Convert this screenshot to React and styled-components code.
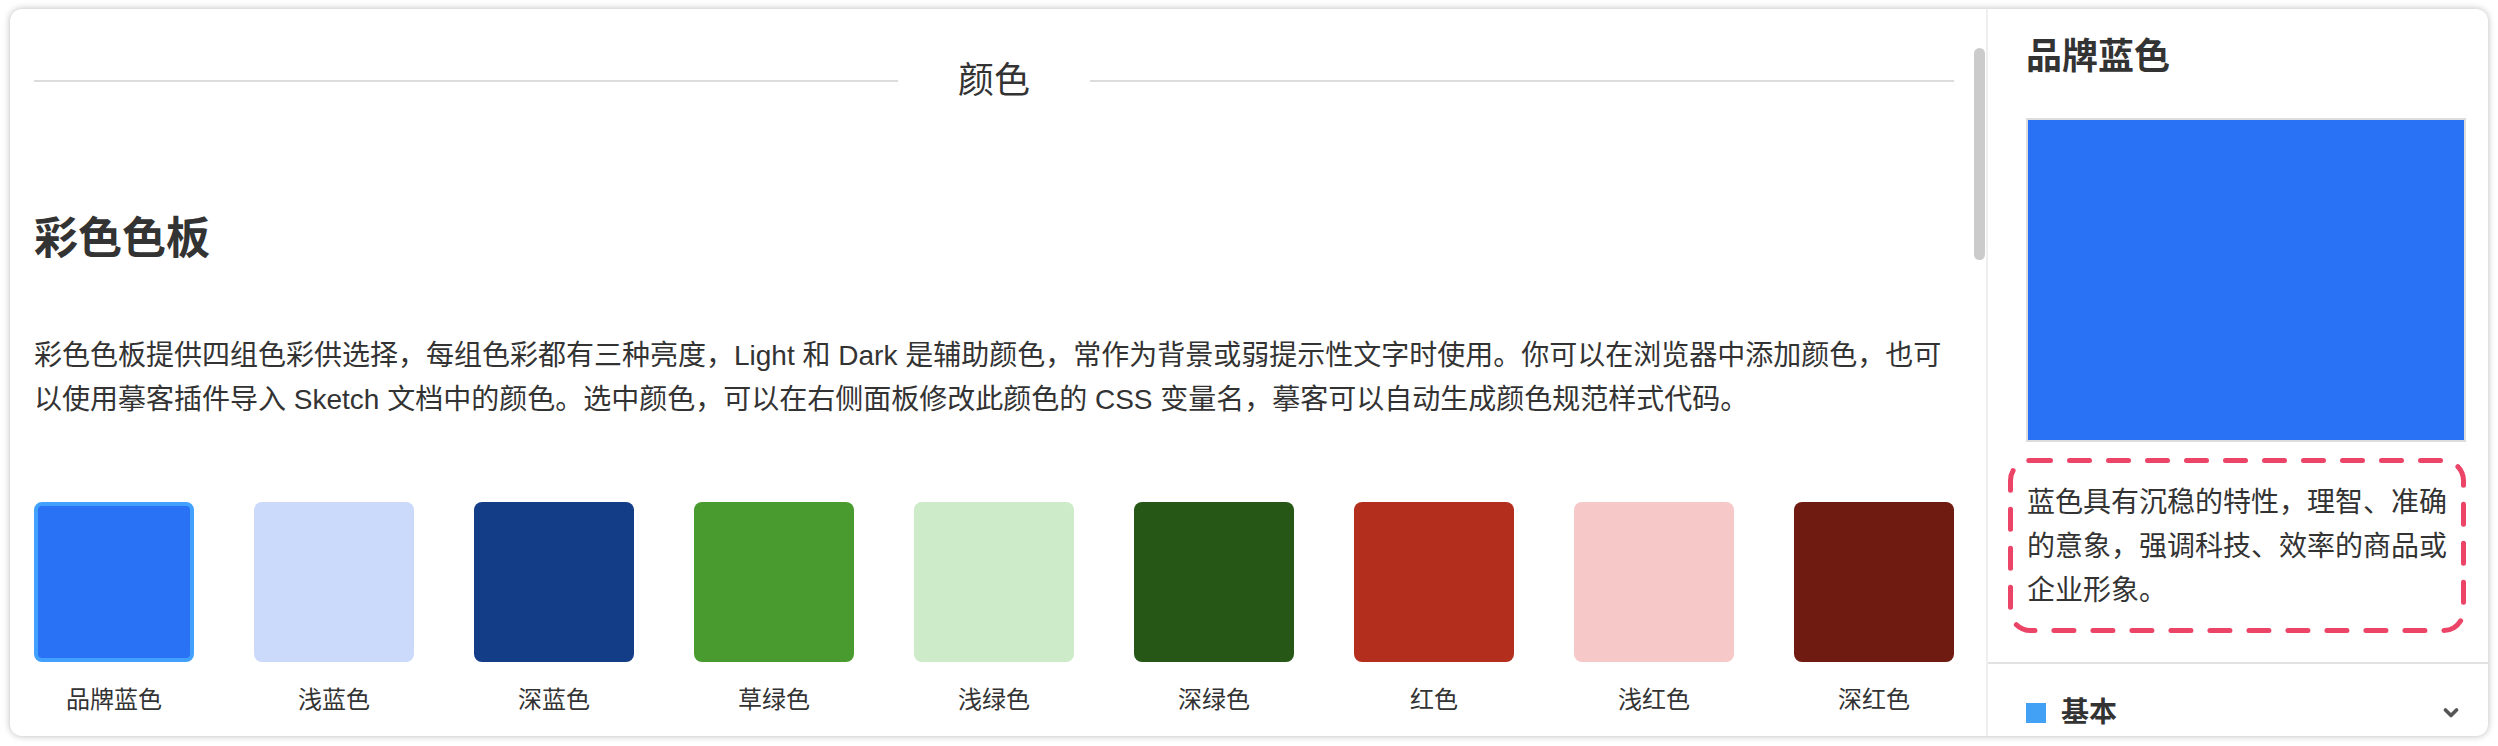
import styled, { createGlobalStyle } from 'styled-components';

const GlobalStyle = createGlobalStyle`
	html, body {
		margin: 0;
		padding: 0;
		background: #fff;
	}
	body {
		font-family: 'Liberation Sans', 'Noto Sans CJK SC', sans-serif;
		color: #333;
	}
	* {
		box-sizing: border-box;
	}
`;

const swatches = [
	{ name: '品牌蓝色', color: '#2972f5', selected: true },
	{ name: '浅蓝色', color: '#cbd9fb' },
	{ name: '深蓝色', color: '#143d88' },
	{ name: '草绿色', color: '#4a9b2f' },
	{ name: '浅绿色', color: '#cdeac9' },
	{ name: '深绿色', color: '#275717' },
	{ name: '红色', color: '#b42e1e' },
	{ name: '浅红色', color: '#f6c8c8' },
	{ name: '深红色', color: '#701b12' },
];

const App = () => {
	return (
		<Page>
			<GlobalStyle />
			<Card>
				<Main>
					<SectionHeading>
						<Rule />
						<span>颜色</span>
						<Rule />
					</SectionHeading>
					<Title>彩色色板</Title>
					<Intro>
						彩色色板提供四组色彩供选择，每组色彩都有三种亮度，Light 和 Dark
						是辅助颜色，常作为背景或弱提示性文字时使用。你可以在浏览器中添加颜色，也可以使用摹客插件导入
						Sketch 文档中的颜色。选中颜色，可以在右侧面板修改此颜色的 CSS
						变量名，摹客可以自动生成颜色规范样式代码。
					</Intro>
					<SwatchRow>
						{swatches.map((s) => (
							<Swatch key={s.name}>
								<Chip $color={s.color} $selected={s.selected} />
								<ChipLabel>{s.name}</ChipLabel>
							</Swatch>
						))}
					</SwatchRow>
					<ScrollThumb />
				</Main>
				<Side>
					<Detail>
						<SideTitle>品牌蓝色</SideTitle>
						<Preview />
						<Note>
							<svg width='458' height='175'>
								<rect
									x='2.5'
									y='2.5'
									width='453'
									height='170'
									rx='20'
									fill='none'
									stroke='#ec4467'
									strokeWidth='5'
									strokeDasharray='20 19'
									strokeLinecap='round'
								/>
							</svg>
							蓝色具有沉稳的特性，理智、准确的意象，强调科技、效率的商品或企业形象。
						</Note>
					</Detail>
					<Group>
						<GroupDot />
						<GroupName>基本</GroupName>
						<svg width='16' height='12' viewBox='0 0 16 12'>
							<polyline
								points='2.5,3 8,8.5 13.5,3'
								fill='none'
								stroke='#555'
								strokeWidth='3.6'
								strokeLinecap='round'
								strokeLinejoin='round'
							/>
						</svg>
					</Group>
				</Side>
			</Card>
		</Page>
	);
};

const Page = styled.div`
	padding: 9px 10px;
`;

const Card = styled.div`
	width: 2478px;
	height: 727px;
	display: flex;
	background: #fff;
	border-radius: 12px;
	overflow: hidden;
	box-shadow: 0 0 7px rgba(0, 0, 0, 0.28);
`;

const Main = styled.main`
	position: relative;
	flex: 1;
	padding: 45px 32px 0 24px;
	overflow: hidden;
`;

const SectionHeading = styled.div`
	display: flex;
	align-items: center;
	gap: 60px;
	font-size: 36px;
	line-height: 54px;
	color: #333;
`;

const Rule = styled.div`
	flex: 1;
	height: 2px;
	background: #dcdcdc;
`;

const Title = styled.h2`
	margin: 98px 0 0;
	font-size: 44px;
	line-height: 66px;
	font-weight: 700;
	color: #333;
`;

const Intro = styled.p`
	margin: 62px -12px 0 0;
	font-size: 28px;
	line-height: 44px;
	color: #333;
`;

const SwatchRow = styled.div`
	margin-top: 80px;
	display: flex;
	justify-content: space-between;
`;

const Swatch = styled.div`
	width: 160px;
	display: flex;
	flex-direction: column;
	align-items: center;
	gap: 20px;
`;

const Chip = styled.div`
	width: 160px;
	height: 160px;
	border-radius: 8px;
	background: ${(p) => p.$color};
	border: ${(p) => (p.$selected ? '4px solid #42a0ff' : 'none')};
`;

const ChipLabel = styled.span`
	font-size: 24px;
	line-height: 36px;
	color: #333;
	white-space: nowrap;
`;

const ScrollThumb = styled.div`
	position: absolute;
	top: 39px;
	right: 1px;
	width: 11px;
	height: 212px;
	border-radius: 6px;
	background: #cbcbcb;
`;

const Side = styled.aside`
	width: 502px;
	flex-shrink: 0;
	border-left: 2px solid #efefef;
	display: flex;
	flex-direction: column;
`;

const Detail = styled.section`
	padding: 21px 22px 29px 38px;
	border-bottom: 2px solid #e2e2e2;
`;

const SideTitle = styled.h3`
	margin: 0;
	font-size: 36px;
	line-height: 54px;
	font-weight: 700;
	color: #333;
`;

const Preview = styled.div`
	margin-top: 34px;
	height: 324px;
	background: #2972f5;
	border: 2px solid #dcdcdc;
`;

const Note = styled.div`
	position: relative;
	margin: 16px 0 0 -18px;
	width: 458px;
	height: 175px;
	padding: 23px 17px 0 19px;
	font-size: 28px;
	line-height: 44px;
	color: #333;

	svg {
		position: absolute;
		left: 0;
		top: 0;
	}
`;

const Group = styled.div`
	display: flex;
	align-items: center;
	padding: 28px 29px 0 38px;
	line-height: 42px;
`;

const GroupDot = styled.span`
	width: 20px;
	height: 20px;
	background: #42a0f5;
`;

const GroupName = styled.span`
	flex: 1;
	margin-left: 15px;
	font-size: 28px;
	font-weight: 700;
	color: #333;
`;

export default App;
